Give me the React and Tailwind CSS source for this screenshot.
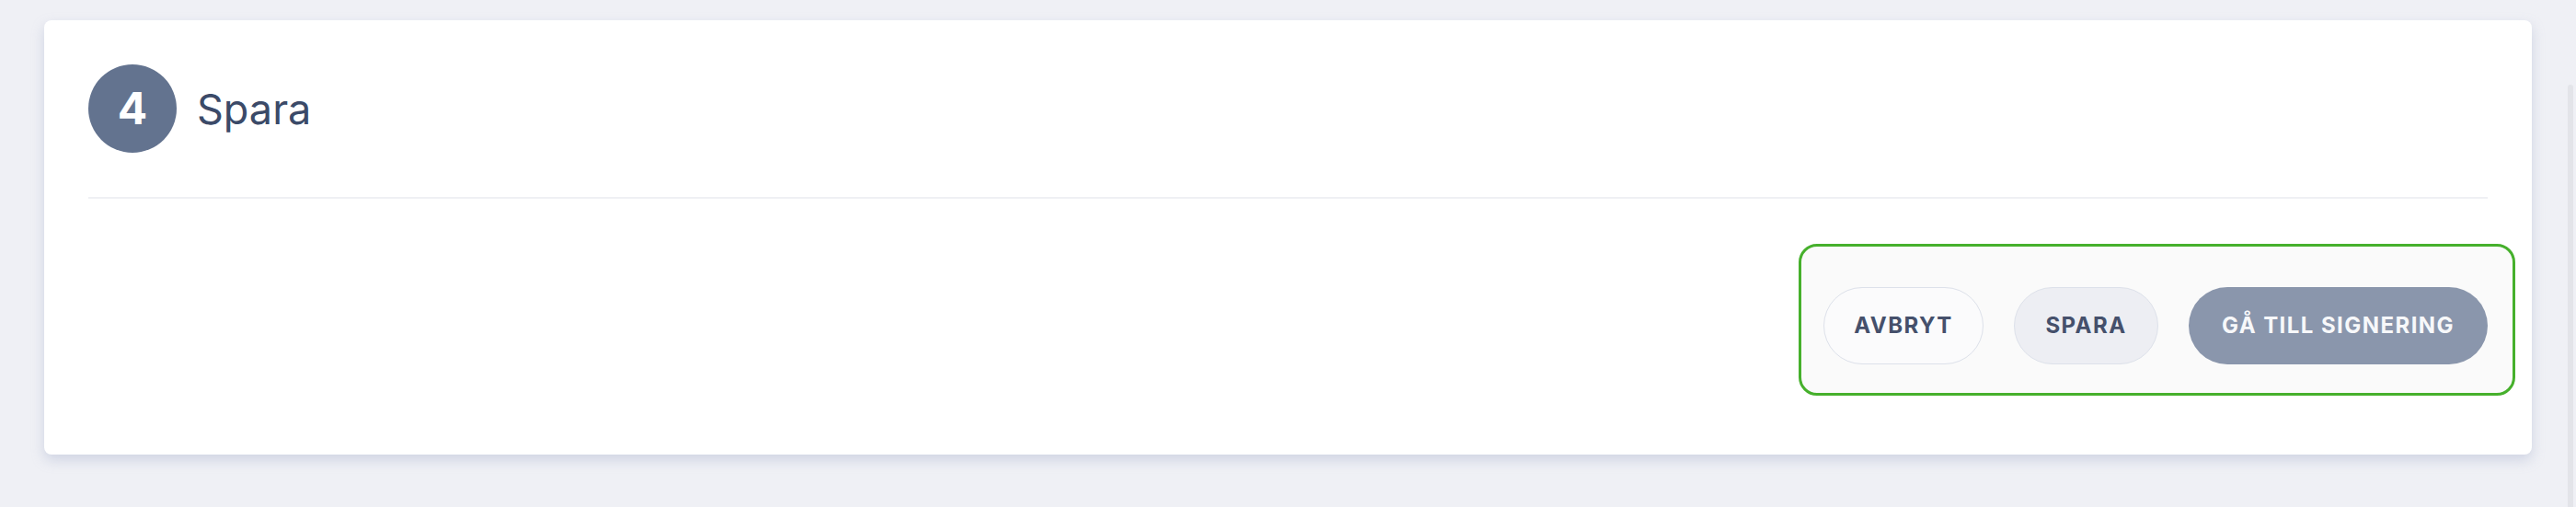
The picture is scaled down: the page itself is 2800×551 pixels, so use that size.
export default function App() {
  return (
    <div
      className="relative min-h-[551px] w-full bg-[#eff0f5] pt-[22px] px-[48px]"
      style={{ fontFamily: "Inter, 'Noto Sans', sans-serif" }}
    >
      <div className="flex h-[472px] flex-col rounded-[8px] bg-white p-[48px] shadow-[0_6px_14px_rgba(150,160,195,0.35)]">
        <div className="flex items-center gap-[22px]">
          <div className="flex h-[96px] w-[96px] items-center justify-center rounded-full bg-[#63738f] text-[48px] font-bold leading-none text-white">
            4
          </div>
          <div className="text-[45px] leading-none text-[#3b4a68]">Spara</div>
        </div>
        <div className="mt-[48px] h-[2px] w-full bg-[#eff0f4]" />
        <div className="mt-[49px] flex justify-end">
          <div className="-mr-[30px] flex items-center gap-[33px] rounded-[20px] border-[3px] border-[#46b02c] bg-[#fafafa] pb-[31px] pl-[24px] pr-[27px] pt-[44px]">
            <button className="flex h-[84px] w-[174px] items-center justify-center rounded-full border border-[#dde1ea] bg-[#fbfbfc] text-[24px] font-bold tracking-[0.06em] text-[#45506b]">
              AVBRYT
            </button>
            <button className="flex h-[84px] w-[157px] items-center justify-center rounded-full border border-[#dde1ea] bg-[#edeef3] text-[24px] font-bold tracking-[0.06em] text-[#45506b]">
              SPARA
            </button>
            <button className="flex h-[84px] w-[325px] items-center justify-center rounded-full bg-[#8a96ac] text-[24px] font-bold tracking-[0.06em] text-[#f7f8fa]">
              GÅ TILL SIGNERING
            </button>
          </div>
        </div>
      </div>
      <div className="absolute bottom-0 right-[3px] top-[92px] w-[6px] rounded-t-full bg-[#e3e4e9]" />
    </div>
  );
}
